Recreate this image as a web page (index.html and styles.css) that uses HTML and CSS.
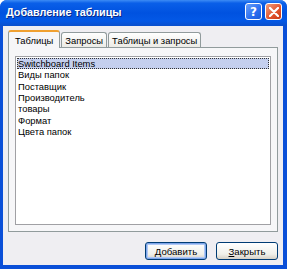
FILE: index.html
```html
<!DOCTYPE html>
<html lang="ru">
<head>
    <meta charset="UTF-8">
    <title>Добавление таблицы</title>
    <link rel="stylesheet" href="styles.css">
</head>
<body>
    <div class="window">
        <div class="titlebar">
            <span class="title">Добавление таблицы</span>
            <div class="caption-buttons">
                <div class="cap-btn help">?</div>
                <div class="cap-btn close">
                    <svg width="10" height="10" viewBox="0 0 10 10">
                        <path d="M1 1 L9 9 M9 1 L1 9" stroke="#fff" stroke-width="2.2" stroke-linecap="round"/>
                    </svg>
                </div>
            </div>
        </div>
        <div class="client">
            <div class="tabs">
                <div class="tab active">Таблицы</div>
                <div class="tab">Запросы</div>
                <div class="tab">Таблицы и запросы</div>
            </div>
            <div class="panel">
                <div class="listbox">
                    <div class="item selected">Switchboard Items</div>
                    <div class="item">Виды папок</div>
                    <div class="item">Поставщик</div>
                    <div class="item">Производитель</div>
                    <div class="item">товары</div>
                    <div class="item">Формат</div>
                    <div class="item">Цвета папок</div>
                </div>
            </div>
            <div class="buttons">
                <button class="default"><u>Д</u>обавить</button>
                <button><u>З</u>акрыть</button>
            </div>
        </div>
    </div>
</body>
</html>
```

FILE: styles.css
```css
body {
    margin: 0;
    font-family: "Liberation Sans", Arial, sans-serif;
    font-size: 9.4px;
}
.window {
    width: 287px;
    height: 269px;
    box-sizing: border-box;
    background: #0a4fd8;
    border-radius: 7px 7px 0 0;
    padding: 0 4px 4px 3px;
    display: flex;
    flex-direction: column;
}
.titlebar {
    height: 26px;
    margin: 0 -4px 0 -3px;
    padding: 0 5px 0 6px;
    border-radius: 7px 7px 0 0;
    background: linear-gradient(#3d8cf5 0%, #0a5fe8 12%, #0052e0 50%, #0358e6 80%, #0a4fcc 100%);
    display: flex;
    align-items: center;
    justify-content: space-between;
}
.title {
    color: #fff;
    font-family: "Liberation Sans", Arial, sans-serif;
    font-weight: bold;
    font-size: 10.8px;
    text-shadow: 1px 1px 0 #0a2a88;
    margin-top: -2px;
}
.caption-buttons {
    display: flex;
    gap: 3px;
    margin-top: -3px;
}
.cap-btn {
    width: 17px;
    height: 17px;
    box-sizing: border-box;
    border: 1px solid #fff;
    border-radius: 3px;
    display: flex;
    align-items: center;
    justify-content: center;
}
.help {
    background: linear-gradient(135deg, #6aa0f8, #2a6ef0 60%, #1b5ad8);
    color: #fff;
    font-family: "DejaVu Sans", sans-serif;
    font-weight: bold;
    font-size: 12px;
}
.close {
    background: linear-gradient(135deg, #f0a080, #e0502a 60%, #c83a18);
}
.client {
    flex: 1;
    background: #efeef2;
    padding: 4px 5px 0 5px;
    display: flex;
    flex-direction: column;
}
.tabs {
    display: flex;
    align-items: flex-end;
    height: 17px;
    position: relative;
    z-index: 1;
}
.tab {
    height: 15px;
    box-sizing: border-box;
    border: 1px solid #919b9c;
    border-bottom: none;
    border-radius: 3px 3px 0 0;
    background: linear-gradient(#ffffff, #ecebe6);
    padding: 2px 3px 0 3px;
    margin-right: 1px;
    color: #000;
}
.tab.active {
    height: 18px;
    margin-bottom: -1px;
    background: #f6f6f8;
    border-top: 2px solid #f0a030;
    padding: 3px 6px 0 6px;
}
.panel {
    height: 185px;
    box-sizing: border-box;
    border: 1px solid #919b9c;
    background: #f6f6f8;
    padding: 8px 6px 6px 6px;
}
.listbox {
    height: 100%;
    box-sizing: border-box;
    border: 1px solid #a0a0a4;
    background: #fff;
    padding: 1px;
}
.item {
    height: 11.33px;
    line-height: 11px;
    padding-left: 1px;
    color: #000;
    white-space: nowrap;
}
.item.selected {
    background: #c4cfee;
    outline: 1px dotted #333;
    outline-offset: -1px;
}
.buttons {
    display: flex;
    justify-content: flex-end;
    gap: 9px;
    margin-top: 10px;
}
.buttons button {
    width: 62px;
    height: 18px;
    box-sizing: border-box;
    border: 1px solid #003c74;
    border-radius: 3px;
    background: linear-gradient(#ffffff, #f0f0ea 70%, #d6d0c5);
    font-family: "Liberation Sans", Arial, sans-serif;
    font-size: 9.6px;
    padding: 0;
    color: #000;
}
.buttons button.default {
    box-shadow: inset 0 0 0 1px #7ea6ea, inset 0 0 0 2px #b0c8f4;
}
```
